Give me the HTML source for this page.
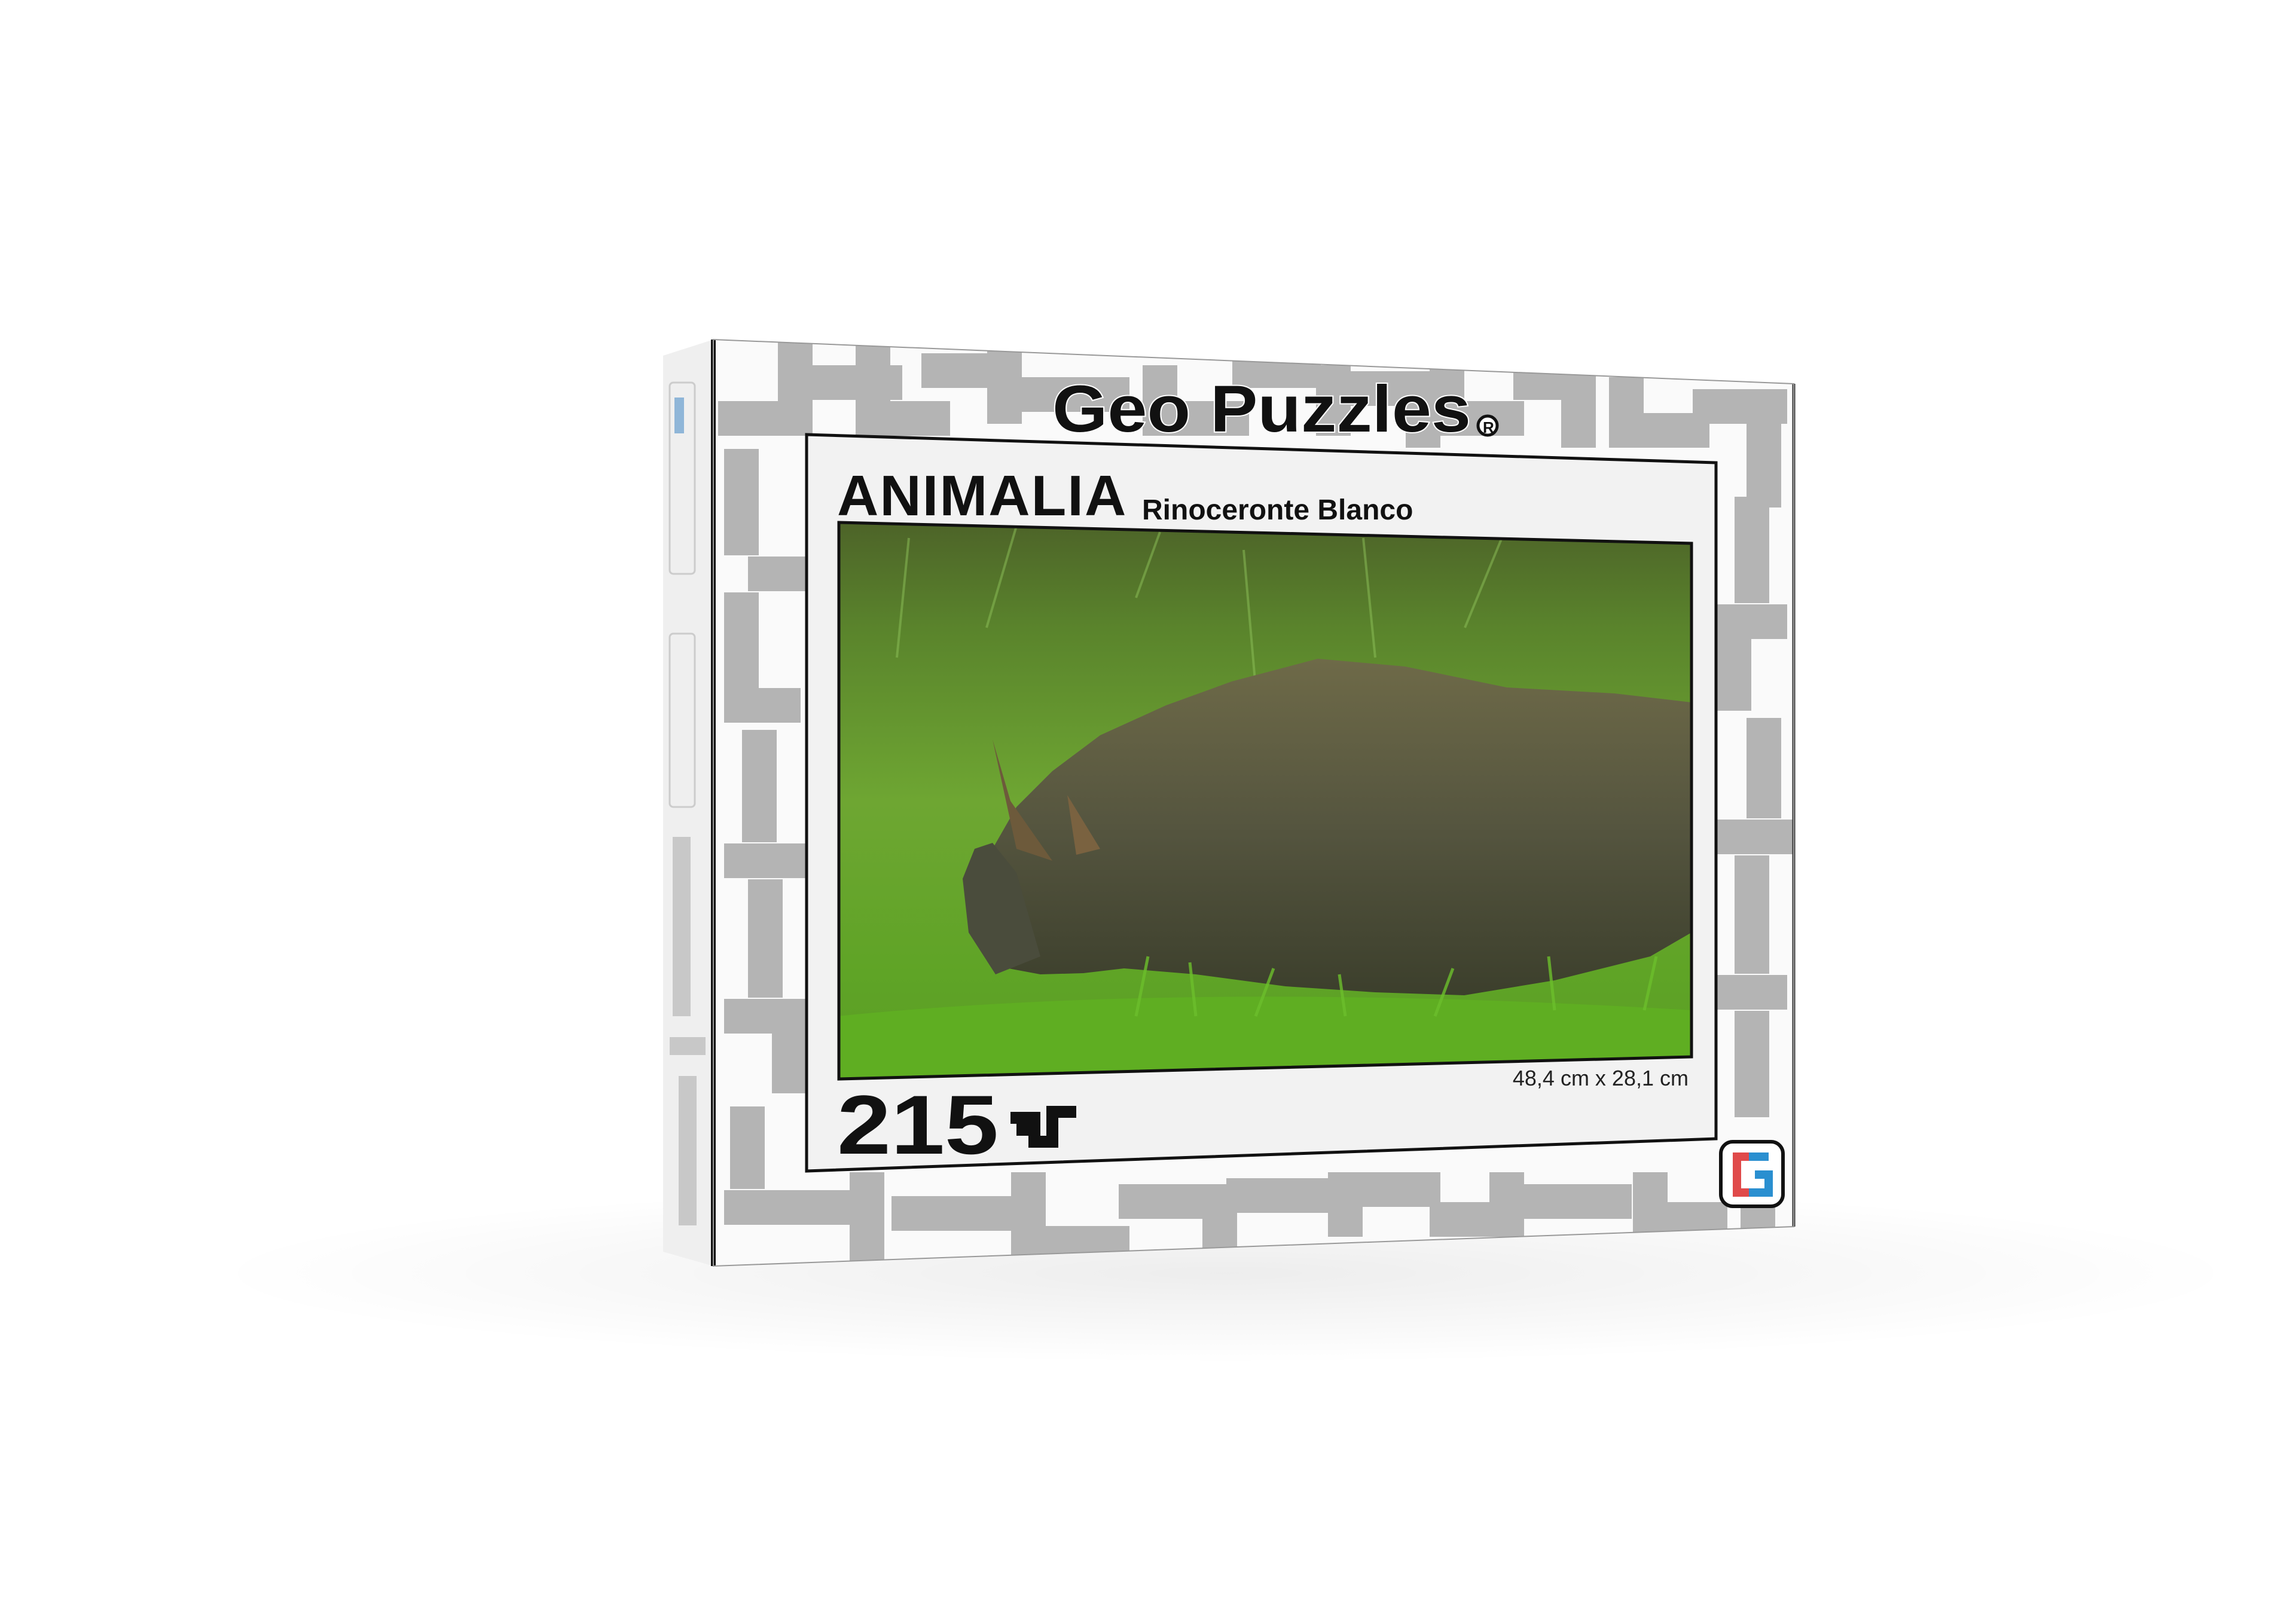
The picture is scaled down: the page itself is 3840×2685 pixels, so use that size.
<!DOCTYPE html>
<html><head><meta charset="utf-8"><style>
html,body{margin:0;padding:0;background:#fff;}
svg{display:block;}
text{font-family:"Liberation Sans",sans-serif;}
</style></head><body>
<svg width="3840" height="2685" viewBox="0 0 3840 2685" xmlns="http://www.w3.org/2000/svg">
<defs>
<radialGradient id="sh" cx="0.5" cy="0.5" r="0.5">
<stop offset="0" stop-color="#000" stop-opacity="0.07"/>
<stop offset="1" stop-color="#000" stop-opacity="0"/>
</radialGradient>
<linearGradient id="grass" x1="0" y1="0" x2="0" y2="1">
<stop offset="0" stop-color="#4c6128"/>
<stop offset="0.2" stop-color="#5a842c"/>
<stop offset="0.5" stop-color="#6ea632"/>
<stop offset="0.8" stop-color="#5fa426"/>
<stop offset="1" stop-color="#5a9c24"/>
</linearGradient>
<linearGradient id="rh" x1="0" y1="0" x2="0" y2="1">
<stop offset="0" stop-color="#6e6a48"/>
<stop offset="0.5" stop-color="#55553f"/>
<stop offset="1" stop-color="#3c3f2c"/>
</linearGradient>
<clipPath id="face"><polygon points="1193,568 3000,642 3000,2052 1193,2118"/></clipPath>
<clipPath id="photo"><polygon points="1403,874 2829,909 2829,1768 1403,1805"/></clipPath>
</defs>
<ellipse cx="2050" cy="2130" rx="1700" ry="150" fill="url(#sh)"/>
<!-- side -->
<polygon points="1109,595 1193,568 1193,2118 1109,2094" fill="#efefef"/>
<rect x="1120" y="640" width="42" height="320" rx="6" fill="none" stroke="#ccc" stroke-width="3"/>
<rect x="1128" y="665" width="16" height="60" fill="#8fb6d8"/>
<rect x="1120" y="1060" width="42" height="290" rx="6" fill="none" stroke="#ccc" stroke-width="3"/>
<g stroke="#c8c8c8" stroke-width="30" fill="none">
<path d="M1140 1400 V1700 M1120 1750 H1180 M1150 1800 V2050"/>
</g>
<!-- face -->
<polygon points="1193,568 3000,642 3000,2052 1193,2118" fill="#fafafa"/>
<g clip-path="url(#face)" stroke="#b4b4b4" stroke-width="58" fill="none" stroke-linecap="square">
<path d="M1230 700 H1330 V600 M1380 640 H1480 M1460 600 V700 H1560 M1570 620 H1650 M1680 600 V680 M1720 660 H1860 M1940 640 V700 H2060 M2090 620 H2180 M2230 640 V700 M2270 650 H2380 V720 M2420 640 V700 H2520 M2560 640 H2640 V720 M2720 660 V720 H2830 M2860 680 H2960 M2950 720 V820"/>
<path d="M1240 780 V900 M1280 960 H1330 M1240 1020 V1180 H1310 M1270 1250 V1380 M1240 1440 H1320 M1280 1500 V1640 M1240 1700 H1320 V1800 M1250 1880 V1960"/>
<path d="M2930 860 V980 M2960 1040 H2900 V1160 M2950 1230 V1340 M2900 1400 H2970 M2930 1460 V1600 M2960 1660 H2900 M2930 1720 V1840"/>
<path d="M1240 2020 H1400 M1450 1990 V2080 M1520 2030 H1680 M1720 1990 V2080 H1860 M1900 2010 H2040 V2070 M2080 2000 H2200 M2250 2040 V1990 H2380 M2420 2040 H2520 V1990 M2570 2010 H2700 M2760 1990 V2040 H2860 M2940 1960 V2040"/>
</g>
<polyline points="1193,568 1193,2118" stroke="#111" stroke-width="8"/>
<polyline points="3000,642 3000,2052" stroke="#333" stroke-width="5"/>
<polygon points="1193,568 3000,642 3000,2052 1193,2118" fill="none" stroke="#999" stroke-width="2"/>
<!-- inner panel -->
<polygon points="1349,727 2870,774 2870,1905 1349,1959" fill="#f2f2f2" stroke="#111" stroke-width="5"/>
<!-- photo -->
<g clip-path="url(#photo)">
<rect x="1400" y="860" width="1440" height="960" fill="url(#grass)"/>
<g stroke="#8ec25a" stroke-width="4" opacity="0.5">
<path d="M1500 1100 L1520 900 M1650 1050 L1700 880 M1900 1000 L1940 890 M2300 1100 L2280 900 M2450 1050 L2520 880 M2100 1150 L2080 920"/>
</g>
<path d="M1665 1616 L1640 1500 L1660 1420 L1700 1350 L1760 1290 L1840 1230 L1950 1180 L2060 1140 L2204 1102 L2350 1115 L2520 1150 L2700 1160 L2829 1175 L2829 1560 L2760 1600 L2600 1640 L2449 1665 L2300 1660 L2150 1650 L2000 1630 L1880 1620 L1812 1628 L1740 1630 Z" fill="url(#rh)"/>
<path d="M1665 1630 L1620 1560 L1610 1470 L1630 1420 L1660 1410 L1700 1460 L1740 1600 Z" fill="#4a4c3c"/>
<path d="M1700 1420 L1660 1237 L1690 1340 L1760 1440 Z" fill="#6d5a3b"/>
<path d="M1800 1430 L1785 1330 L1840 1420 Z" fill="#7a6240"/>
<path d="M1400 1700 Q2000 1640 2829 1690 L2829 1820 L1400 1820 Z" fill="#5fae22"/>
<g stroke="#6cbf2c" stroke-width="5" opacity="0.8">
<path d="M1900 1700 L1920 1600 M2000 1700 L1990 1610 M2100 1700 L2130 1620 M2250 1700 L2240 1630 M2400 1700 L2430 1620 M2600 1690 L2590 1600 M2750 1690 L2770 1600"/>
</g>
</g>
<polygon points="1403,874 2829,909 2829,1768 1403,1805" fill="none" stroke="#111" stroke-width="5"/>
<!-- texts -->
<text x="1760" y="722" font-size="110" font-weight="bold" fill="#111" stroke="#fff" stroke-width="4" paint-order="stroke" textLength="700" lengthAdjust="spacingAndGlyphs">Geo Puzzles</text>
<circle cx="2488" cy="712" r="16" fill="#fff" stroke="#111" stroke-width="5"/>
<text x="2480" y="724" font-size="26" font-weight="bold" fill="#111">R</text>
<text x="1400" y="862" font-size="96" fill="#111" font-weight="bold" letter-spacing="2">ANIMALIA</text>
<text x="1910" y="869" font-size="48" fill="#111" font-weight="bold">Rinoceronte Blanco</text>
<text x="2824" y="1816" font-size="36" fill="#222" text-anchor="end">48,4 cm x 28,1 cm</text>
<text x="1400" y="1930" font-size="140" font-weight="bold" fill="#111" textLength="270" lengthAdjust="spacingAndGlyphs">215</text>
<path d="M1690 1870 H1730 V1910 H1760 V1860 H1800 M1710 1870 V1900" stroke="#111" stroke-width="20" fill="none"/>
<!-- G logo -->
<rect x="2878" y="1910" width="104" height="108" rx="20" fill="#fff" stroke="#111" stroke-width="6"/>
<path d="M2935 1935 H2905 V1995 H2935" stroke="#e04a4a" stroke-width="14" fill="none"/>
<path d="M2925 1935 H2958 M2935 1965 H2958 V1995 H2925" stroke="#2a8fd0" stroke-width="14" fill="none"/>
</svg>
</body></html>
